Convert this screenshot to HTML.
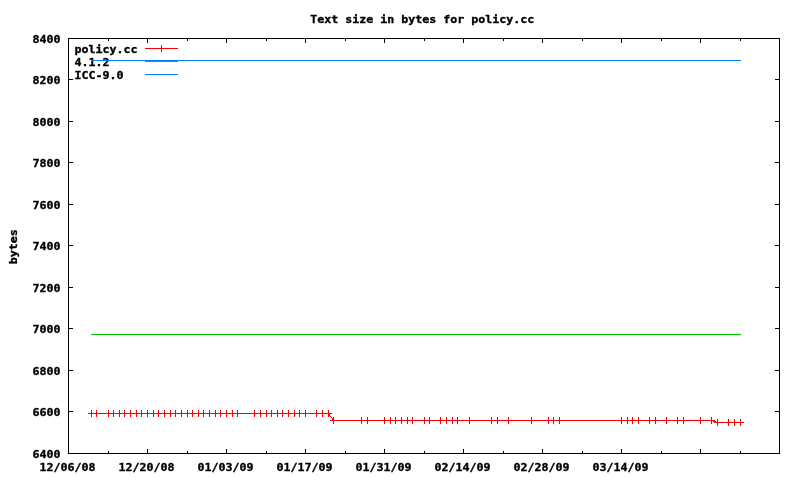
<!DOCTYPE html>
<html lang="en">
<head>
<meta charset="utf-8">
<title>Text size in bytes for policy.cc</title>
<style>
html,body{margin:0;padding:0;background:#fff}
body{width:800px;height:480px;position:relative;overflow:hidden}
#plot{position:absolute;left:0;top:0;width:800px;height:480px;background:#fff;overflow:hidden}
#plot i{position:absolute;display:block}
#txt{position:absolute;left:0;top:0;width:800px;height:480px;will-change:transform}
.t{position:absolute;display:block;font-family:"DejaVu Sans Mono","Liberation Mono",monospace;font-weight:bold;font-size:11px;line-height:13px;height:13px;color:#000;white-space:pre;margin-top:-10.5px;-webkit-text-stroke:0.35px #000;transform:scaleX(1.0574)}
.yl{left:0;width:60.6px;text-align:right;transform-origin:100% 50%}
.xl{top:471px;width:80px;text-align:center;transform-origin:50% 50%;transform:translateX(-0.5px) scaleX(1.0574)}
#title{left:223px;width:400px;text-align:center;top:23px;transform-origin:50% 50%;transform:translateX(-0.7px) scaleX(1.0574)}
#ylab{left:-33px;top:247px;width:100px;text-align:center;margin-top:-10px;transform-origin:50px 10px;transform:translate(-0.4px,-0.2px) rotate(-90deg) scaleX(1.0574)}
.lg{left:74px;transform-origin:0 50%;transform:translateX(0.6px) scaleX(1.0574)}
</style>
</head>
<body>
<div id="plot">
<i style="left:68px;top:38px;width:712px;height:1px;background:#000"></i>
<i style="left:68px;top:453px;width:712px;height:1px;background:#000"></i>
<i style="left:68px;top:38px;width:1px;height:416px;background:#000"></i>
<i style="left:779px;top:38px;width:1px;height:416px;background:#000"></i>
<i style="left:69px;top:38px;width:4px;height:1px;background:#000"></i>
<i style="left:775px;top:38px;width:4px;height:1px;background:#000"></i>
<i style="left:69px;top:79px;width:4px;height:1px;background:#000"></i>
<i style="left:775px;top:79px;width:4px;height:1px;background:#000"></i>
<i style="left:69px;top:121px;width:4px;height:1px;background:#000"></i>
<i style="left:775px;top:121px;width:4px;height:1px;background:#000"></i>
<i style="left:69px;top:162px;width:4px;height:1px;background:#000"></i>
<i style="left:775px;top:162px;width:4px;height:1px;background:#000"></i>
<i style="left:69px;top:204px;width:4px;height:1px;background:#000"></i>
<i style="left:775px;top:204px;width:4px;height:1px;background:#000"></i>
<i style="left:69px;top:245px;width:4px;height:1px;background:#000"></i>
<i style="left:775px;top:245px;width:4px;height:1px;background:#000"></i>
<i style="left:69px;top:287px;width:4px;height:1px;background:#000"></i>
<i style="left:775px;top:287px;width:4px;height:1px;background:#000"></i>
<i style="left:69px;top:328px;width:4px;height:1px;background:#000"></i>
<i style="left:775px;top:328px;width:4px;height:1px;background:#000"></i>
<i style="left:69px;top:370px;width:4px;height:1px;background:#000"></i>
<i style="left:775px;top:370px;width:4px;height:1px;background:#000"></i>
<i style="left:69px;top:411px;width:4px;height:1px;background:#000"></i>
<i style="left:775px;top:411px;width:4px;height:1px;background:#000"></i>
<i style="left:69px;top:453px;width:4px;height:1px;background:#000"></i>
<i style="left:775px;top:453px;width:4px;height:1px;background:#000"></i>
<i style="left:68px;top:449px;width:1px;height:4px;background:#000"></i>
<i style="left:68px;top:39px;width:1px;height:4px;background:#000"></i>
<i style="left:147px;top:449px;width:1px;height:4px;background:#000"></i>
<i style="left:147px;top:39px;width:1px;height:4px;background:#000"></i>
<i style="left:226px;top:449px;width:1px;height:4px;background:#000"></i>
<i style="left:226px;top:39px;width:1px;height:4px;background:#000"></i>
<i style="left:305px;top:449px;width:1px;height:4px;background:#000"></i>
<i style="left:305px;top:39px;width:1px;height:4px;background:#000"></i>
<i style="left:384px;top:449px;width:1px;height:4px;background:#000"></i>
<i style="left:384px;top:39px;width:1px;height:4px;background:#000"></i>
<i style="left:463px;top:449px;width:1px;height:4px;background:#000"></i>
<i style="left:463px;top:39px;width:1px;height:4px;background:#000"></i>
<i style="left:542px;top:449px;width:1px;height:4px;background:#000"></i>
<i style="left:542px;top:39px;width:1px;height:4px;background:#000"></i>
<i style="left:621px;top:449px;width:1px;height:4px;background:#000"></i>
<i style="left:621px;top:39px;width:1px;height:4px;background:#000"></i>
<i style="left:700px;top:449px;width:1px;height:4px;background:#000"></i>
<i style="left:700px;top:39px;width:1px;height:4px;background:#000"></i>
<i style="left:779px;top:449px;width:1px;height:4px;background:#000"></i>
<i style="left:779px;top:39px;width:1px;height:4px;background:#000"></i>
<i style="left:108px;top:451px;width:1px;height:2px;background:#000"></i>
<i style="left:108px;top:39px;width:1px;height:2px;background:#000"></i>
<i style="left:187px;top:451px;width:1px;height:2px;background:#000"></i>
<i style="left:187px;top:39px;width:1px;height:2px;background:#000"></i>
<i style="left:266px;top:451px;width:1px;height:2px;background:#000"></i>
<i style="left:266px;top:39px;width:1px;height:2px;background:#000"></i>
<i style="left:345px;top:451px;width:1px;height:2px;background:#000"></i>
<i style="left:345px;top:39px;width:1px;height:2px;background:#000"></i>
<i style="left:424px;top:451px;width:1px;height:2px;background:#000"></i>
<i style="left:424px;top:39px;width:1px;height:2px;background:#000"></i>
<i style="left:503px;top:451px;width:1px;height:2px;background:#000"></i>
<i style="left:503px;top:39px;width:1px;height:2px;background:#000"></i>
<i style="left:582px;top:451px;width:1px;height:2px;background:#000"></i>
<i style="left:582px;top:39px;width:1px;height:2px;background:#000"></i>
<i style="left:661px;top:451px;width:1px;height:2px;background:#000"></i>
<i style="left:661px;top:39px;width:1px;height:2px;background:#000"></i>
<i style="left:740px;top:451px;width:1px;height:2px;background:#000"></i>
<i style="left:740px;top:39px;width:1px;height:2px;background:#000"></i>
<div id="txt">
<span class="t" id="title">Text size in bytes for policy.cc</span>
<span class="t" id="ylab">bytes</span>
<span class="t lg" style="top:53px">policy.cc</span>
<span class="t lg" style="top:66px">4.1.2</span>
<span class="t lg" style="top:79px">ICC-9.0</span>
<span class="t yl" style="top:43px">8400</span>
<span class="t yl" style="top:84px">8200</span>
<span class="t yl" style="top:126px">8000</span>
<span class="t yl" style="top:167px">7800</span>
<span class="t yl" style="top:209px">7600</span>
<span class="t yl" style="top:250px">7400</span>
<span class="t yl" style="top:292px">7200</span>
<span class="t yl" style="top:333px">7000</span>
<span class="t yl" style="top:375px">6800</span>
<span class="t yl" style="top:416px">6600</span>
<span class="t yl" style="top:458px">6400</span>
<span class="t xl" style="left:28px">12/06/08</span>
<span class="t xl" style="left:107px">12/20/08</span>
<span class="t xl" style="left:186px">01/03/09</span>
<span class="t xl" style="left:265px">01/17/09</span>
<span class="t xl" style="left:344px">01/31/09</span>
<span class="t xl" style="left:423px">02/14/09</span>
<span class="t xl" style="left:502px">02/28/09</span>
<span class="t xl" style="left:581px">03/14/09</span>
</div>
<i style="left:91px;top:60px;width:650px;height:1px;background:#0080ff"></i>
<i style="left:91px;top:334px;width:650px;height:1px;background:#00c000"></i>
<i style="left:145px;top:48px;width:33px;height:1px;background:#ff0000"></i>
<i style="left:161px;top:45px;width:1px;height:7px;background:#ff0000"></i>
<i style="left:145px;top:61px;width:33px;height:1px;background:#00c000"></i>
<i style="left:145px;top:74px;width:33px;height:1px;background:#0080ff"></i>
<i style="left:88px;top:413px;width:244px;height:1px;background:#ff0000"></i>
<i style="left:330px;top:420px;width:385px;height:1px;background:#ff0000"></i>
<i style="left:714px;top:422px;width:30px;height:1px;background:#ff0000"></i>
<i style="left:91px;top:410px;width:1px;height:7px;background:#ff0000"></i>
<i style="left:96px;top:410px;width:1px;height:7px;background:#ff0000"></i>
<i style="left:108px;top:410px;width:1px;height:7px;background:#ff0000"></i>
<i style="left:113px;top:410px;width:1px;height:7px;background:#ff0000"></i>
<i style="left:119px;top:410px;width:1px;height:7px;background:#ff0000"></i>
<i style="left:124px;top:410px;width:1px;height:7px;background:#ff0000"></i>
<i style="left:130px;top:410px;width:1px;height:7px;background:#ff0000"></i>
<i style="left:136px;top:410px;width:1px;height:7px;background:#ff0000"></i>
<i style="left:141px;top:410px;width:1px;height:7px;background:#ff0000"></i>
<i style="left:147px;top:410px;width:1px;height:7px;background:#ff0000"></i>
<i style="left:153px;top:410px;width:1px;height:7px;background:#ff0000"></i>
<i style="left:158px;top:410px;width:1px;height:7px;background:#ff0000"></i>
<i style="left:164px;top:410px;width:1px;height:7px;background:#ff0000"></i>
<i style="left:170px;top:410px;width:1px;height:7px;background:#ff0000"></i>
<i style="left:175px;top:410px;width:1px;height:7px;background:#ff0000"></i>
<i style="left:181px;top:410px;width:1px;height:7px;background:#ff0000"></i>
<i style="left:187px;top:410px;width:1px;height:7px;background:#ff0000"></i>
<i style="left:192px;top:410px;width:1px;height:7px;background:#ff0000"></i>
<i style="left:198px;top:410px;width:1px;height:7px;background:#ff0000"></i>
<i style="left:203px;top:410px;width:1px;height:7px;background:#ff0000"></i>
<i style="left:209px;top:410px;width:1px;height:7px;background:#ff0000"></i>
<i style="left:215px;top:410px;width:1px;height:7px;background:#ff0000"></i>
<i style="left:220px;top:410px;width:1px;height:7px;background:#ff0000"></i>
<i style="left:226px;top:410px;width:1px;height:7px;background:#ff0000"></i>
<i style="left:232px;top:410px;width:1px;height:7px;background:#ff0000"></i>
<i style="left:237px;top:410px;width:1px;height:7px;background:#ff0000"></i>
<i style="left:254px;top:410px;width:1px;height:7px;background:#ff0000"></i>
<i style="left:260px;top:410px;width:1px;height:7px;background:#ff0000"></i>
<i style="left:266px;top:410px;width:1px;height:7px;background:#ff0000"></i>
<i style="left:271px;top:410px;width:1px;height:7px;background:#ff0000"></i>
<i style="left:277px;top:410px;width:1px;height:7px;background:#ff0000"></i>
<i style="left:282px;top:410px;width:1px;height:7px;background:#ff0000"></i>
<i style="left:288px;top:410px;width:1px;height:7px;background:#ff0000"></i>
<i style="left:294px;top:410px;width:1px;height:7px;background:#ff0000"></i>
<i style="left:299px;top:410px;width:1px;height:7px;background:#ff0000"></i>
<i style="left:305px;top:410px;width:1px;height:7px;background:#ff0000"></i>
<i style="left:316px;top:410px;width:1px;height:7px;background:#ff0000"></i>
<i style="left:322px;top:410px;width:1px;height:7px;background:#ff0000"></i>
<i style="left:328px;top:410px;width:1px;height:7px;background:#ff0000"></i>
<i style="left:333px;top:417px;width:1px;height:7px;background:#ff0000"></i>
<i style="left:361px;top:417px;width:1px;height:7px;background:#ff0000"></i>
<i style="left:367px;top:417px;width:1px;height:7px;background:#ff0000"></i>
<i style="left:384px;top:417px;width:1px;height:7px;background:#ff0000"></i>
<i style="left:390px;top:417px;width:1px;height:7px;background:#ff0000"></i>
<i style="left:395px;top:417px;width:1px;height:7px;background:#ff0000"></i>
<i style="left:401px;top:417px;width:1px;height:7px;background:#ff0000"></i>
<i style="left:407px;top:417px;width:1px;height:7px;background:#ff0000"></i>
<i style="left:412px;top:417px;width:1px;height:7px;background:#ff0000"></i>
<i style="left:424px;top:417px;width:1px;height:7px;background:#ff0000"></i>
<i style="left:429px;top:417px;width:1px;height:7px;background:#ff0000"></i>
<i style="left:440px;top:417px;width:1px;height:7px;background:#ff0000"></i>
<i style="left:446px;top:417px;width:1px;height:7px;background:#ff0000"></i>
<i style="left:452px;top:417px;width:1px;height:7px;background:#ff0000"></i>
<i style="left:457px;top:417px;width:1px;height:7px;background:#ff0000"></i>
<i style="left:469px;top:417px;width:1px;height:7px;background:#ff0000"></i>
<i style="left:491px;top:417px;width:1px;height:7px;background:#ff0000"></i>
<i style="left:497px;top:417px;width:1px;height:7px;background:#ff0000"></i>
<i style="left:508px;top:417px;width:1px;height:7px;background:#ff0000"></i>
<i style="left:531px;top:417px;width:1px;height:7px;background:#ff0000"></i>
<i style="left:548px;top:417px;width:1px;height:7px;background:#ff0000"></i>
<i style="left:553px;top:417px;width:1px;height:7px;background:#ff0000"></i>
<i style="left:559px;top:417px;width:1px;height:7px;background:#ff0000"></i>
<i style="left:621px;top:417px;width:1px;height:7px;background:#ff0000"></i>
<i style="left:627px;top:417px;width:1px;height:7px;background:#ff0000"></i>
<i style="left:632px;top:417px;width:1px;height:7px;background:#ff0000"></i>
<i style="left:638px;top:417px;width:1px;height:7px;background:#ff0000"></i>
<i style="left:649px;top:417px;width:1px;height:7px;background:#ff0000"></i>
<i style="left:655px;top:417px;width:1px;height:7px;background:#ff0000"></i>
<i style="left:666px;top:417px;width:1px;height:7px;background:#ff0000"></i>
<i style="left:677px;top:417px;width:1px;height:7px;background:#ff0000"></i>
<i style="left:683px;top:417px;width:1px;height:7px;background:#ff0000"></i>
<i style="left:700px;top:417px;width:1px;height:7px;background:#ff0000"></i>
<i style="left:711px;top:417px;width:1px;height:7px;background:#ff0000"></i>
<i style="left:717px;top:419px;width:1px;height:7px;background:#ff0000"></i>
<i style="left:728px;top:419px;width:1px;height:7px;background:#ff0000"></i>
<i style="left:734px;top:419px;width:1px;height:7px;background:#ff0000"></i>
<i style="left:740px;top:419px;width:1px;height:7px;background:#ff0000"></i>
<i style="left:329px;top:414px;width:1px;height:1px;background:#ff0000"></i>
<i style="left:329px;top:415px;width:1px;height:1px;background:#ff0000"></i>
<i style="left:330px;top:416px;width:1px;height:1px;background:#ff0000"></i>
<i style="left:331px;top:417px;width:1px;height:1px;background:#ff0000"></i>
<i style="left:332px;top:418px;width:1px;height:1px;background:#ff0000"></i>
<i style="left:332px;top:419px;width:1px;height:1px;background:#ff0000"></i>
<i style="left:713px;top:421px;width:3px;height:1px;background:#ff0000"></i>
</div>
</body>
</html>
